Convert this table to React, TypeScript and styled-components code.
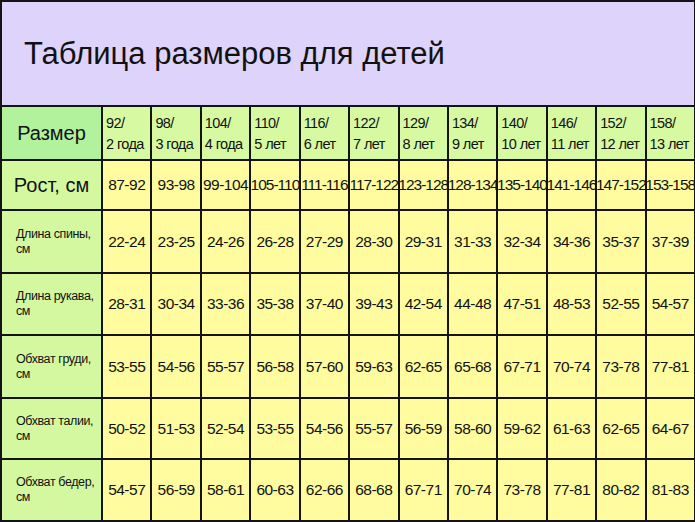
import React from "react";
import styled, { createGlobalStyle } from "styled-components";

const Global = createGlobalStyle`
  html, body { margin: 0; padding: 0; background: #ffffff; }
  body { font-family: "Liberation Sans", Arial, sans-serif; }
`;

const Table = styled.div`
  width: 695px;
  height: 522px;
  box-sizing: border-box;
  background: #141414;
  padding: 2px 1px 2px 2px;
  display: grid;
  grid-template-columns: 99px repeat(12, minmax(0, 1fr));
  grid-template-rows: 103px 52px 48px 61px 60px 61px 59px 60px;
  gap: 2px;
  color: #111;
`;

const Title = styled.div`
  grid-column: 1 / -1;
  background: #ddd3fb;
  display: flex;
  align-items: center;
  padding-left: 22px;
  font-size: 31px;
  color: #111;
`;

const CornerCell = styled.div`
  background: #b2f29c;
  display: flex;
  align-items: center;
  justify-content: center;
  font-size: 20px;
`;

const HeadCell = styled.div`
  background: #d6f9a2;
  padding: 6px 0 0 3px;
  font-size: 14.5px;
  line-height: 21px;
  letter-spacing: -0.6px;
  white-space: nowrap;
  min-width: 0;
`;

const LabelCell = styled.div<{ $big?: boolean }>`
  background: #d4f8a0;
  display: flex;
  align-items: center;
  justify-content: ${(p) => (p.$big ? "center" : "flex-start")};
  padding-left: ${(p) => (p.$big ? "0" : "14px")};
  font-size: ${(p) => (p.$big ? "20px" : "12.5px")};
  line-height: ${(p) => (p.$big ? "24px" : "15px")};
  letter-spacing: ${(p) => (p.$big ? "0" : "-0.4px")};
`;

const DataCell = styled.div<{ $tight?: boolean }>`
  background: #fefc9e;
  display: flex;
  align-items: center;
  justify-content: center;
  font-size: 15.5px;
  letter-spacing: ${(p) => (p.$tight ? "-1px" : "-0.5px")};
  white-space: nowrap;
  min-width: 0;
`;

const sizes = [
  ["92/", "2 года"],
  ["98/", "3 года"],
  ["104/", "4 года"],
  ["110/", "5 лет"],
  ["116/", "6 лет"],
  ["122/", "7 лет"],
  ["129/", "8 лет"],
  ["134/", "9 лет"],
  ["140/", "10 лет"],
  ["146/", "11 лет"],
  ["152/", "12 лет"],
  ["158/", "13 лет"],
];

const rows: { label: string[]; big?: boolean; values: string[] }[] = [
  {
    label: ["Рост, см"],
    big: true,
    values: ["87-92", "93-98", "99-104", "105-110", "111-116", "117-122", "123-128", "128-134", "135-140", "141-146", "147-152", "153-158"],
  },
  {
    label: ["Длина спины,", "см"],
    values: ["22-24", "23-25", "24-26", "26-28", "27-29", "28-30", "29-31", "31-33", "32-34", "34-36", "35-37", "37-39"],
  },
  {
    label: ["Длина рукава,", "см"],
    values: ["28-31", "30-34", "33-36", "35-38", "37-40", "39-43", "42-54", "44-48", "47-51", "48-53", "52-55", "54-57"],
  },
  {
    label: ["Обхват груди,", "см"],
    values: ["53-55", "54-56", "55-57", "56-58", "57-60", "59-63", "62-65", "65-68", "67-71", "70-74", "73-78", "77-81"],
  },
  {
    label: ["Обхват талии,", "см"],
    values: ["50-52", "51-53", "52-54", "53-55", "54-56", "55-57", "56-59", "58-60", "59-62", "61-63", "62-65", "64-67"],
  },
  {
    label: ["Обхват бедер,", "см"],
    values: ["54-57", "56-59", "58-61", "60-63", "62-66", "68-68", "67-71", "70-74", "73-78", "77-81", "80-82", "81-83"],
  },
];

export default function App() {
  return (
    <>
      <Global />
      <Table>
        <Title>Таблица размеров для детей</Title>
        <CornerCell>Размер</CornerCell>
        {sizes.map(([a, b]) => (
          <HeadCell key={a}>
            {a}
            <br />
            {b}
          </HeadCell>
        ))}
        {rows.map((r) => (
          <React.Fragment key={r.label[0]}>
            <LabelCell $big={r.big}>
              <div>
                {r.label.map((l, i) => (
                  <React.Fragment key={i}>
                    {i > 0 && <br />}
                    {l}
                  </React.Fragment>
                ))}
              </div>
            </LabelCell>
            {r.values.map((v, i) => (
              <DataCell key={i} $tight={v.length > 6}>
                {v}
              </DataCell>
            ))}
          </React.Fragment>
        ))}
      </Table>
    </>
  );
}
